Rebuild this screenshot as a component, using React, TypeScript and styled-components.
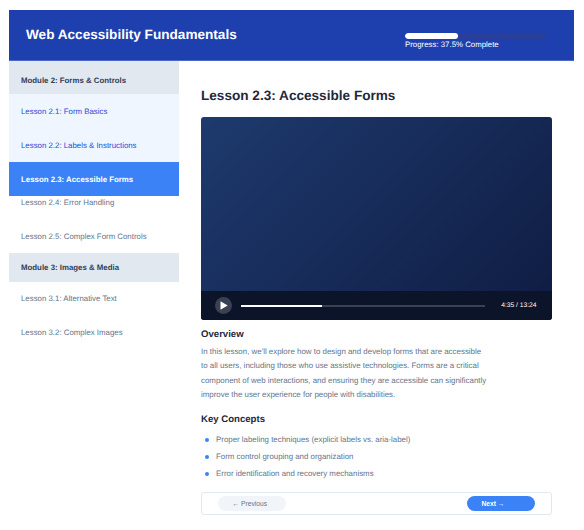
import React from "react";
import styled, { createGlobalStyle } from "styled-components";

const Global = createGlobalStyle`
  html, body { margin: 0; padding: 0; background: #fff; }
  body { font-family: "Liberation Sans", Arial, sans-serif; text-rendering: geometricPrecision; }
  * { box-sizing: border-box; }
`;

const Page = styled.div`
  width: 584px;
  height: 530px;
  padding: 10px 10px 0 9px;
  overflow: hidden;
`;
const Header = styled.header`
  height: 51px;
  display: flex;
  align-items: center;
  justify-content: space-between;
  padding: 0 28px 0 17px;
  background: #1e40af;
  border-bottom: 1px solid #4a68c8;
`;
const Title = styled.h1`
  margin: 0 0 2px;
  font-size: 13.6px;
  font-weight: 700;
  color: #fff;
`;
const ProgressBox = styled.div`
  width: 141px;
  display: flex;
  flex-direction: column;
  margin-top: 13px;
`;
const Track = styled.div`
  height: 6px;
  border-radius: 3px;
  background: #2a3f9a;
  overflow: hidden;
`;
const Fill = styled.div`
  height: 100%;
  border-radius: 3px;
  background: #fff;
`;
const ProgressLabel = styled.span`
  font-size: 7.85px;
  line-height: 12px;
  color: #fff;
`;
const Body = styled.div`
  display: flex;
`;
const Sidebar = styled.nav`
  width: 170px;
  flex: none;
  display: flex;
  flex-direction: column;
`;
const Module = styled.div<{ $h: number; $top?: number }>`
  height: ${(p) => p.$h}px;
  display: flex;
  align-items: center;
  padding: ${(p) => p.$top ?? 0}px 12px 0;
  background: #e2e8f0;
  font-size: 7.85px;
  font-weight: 700;
  color: #334155;
`;
const Lesson = styled.a<{ $state?: "done" | "active"; $tight?: boolean; $h?: number }>`
  height: ${(p) => p.$h ?? (p.$tight ? 24 : 34)}px;
  display: flex;
  align-items: ${(p) => (p.$tight ? "flex-start" : "center")};
  padding: ${(p) => (p.$state ? 2 : 0)}px 12px 0;
  font-size: 7.85px;
  line-height: 14px;
  font-weight: ${(p) => (p.$state === "active" ? 700 : 400)};
  color: ${(p) => (p.$state === "active" ? "#fff" : p.$state === "done" ? "#1d4ed8" : "#64748b")};
  background: ${(p) => (p.$state === "active" ? "#3b82f6" : p.$state === "done" ? "#eff6ff" : "#fff")};
`;
const Main = styled.main`
  flex: 1;
  min-width: 0;
  padding: 25px 22px 0;
`;
const LessonTitle = styled.h2`
  margin: 0 0 11px;
  font-size: 13.6px;
  line-height: 20px;
  font-weight: 700;
  color: #1e293b;
`;
const Video = styled.div`
  height: 203px;
  border-radius: 3px;
  overflow: hidden;
  display: flex;
  flex-direction: column;
  justify-content: flex-end;
  background: linear-gradient(135deg, #1e3a6e 0%, #0f1c42 100%);
`;
const Controls = styled.div`
  height: 29px;
  display: flex;
  align-items: center;
  padding: 0 15.5px 0 14px;
  background: #0c1429;
`;
const PlayButton = styled.button`
  width: 17px;
  height: 17px;
  flex: none;
  padding: 0;
  border: 0;
  border-radius: 50%;
  background: #3a4152;
  display: flex;
  align-items: center;
  justify-content: center;
`;
const Seek = styled.div`
  flex: 1;
  height: 2px;
  margin: 0 16px 0 9px;
  background: #3a4152;
`;
const SeekFill = styled.div`
  height: 100%;
  background: #fff;
`;
const Time = styled.span`
  font-size: 6.7px;
  color: #fff;
`;
const Heading = styled.h3`
  margin: 0;
  font-size: 9.6px;
  line-height: 14px;
  font-weight: 700;
  color: #1e293b;
`;
const OverviewHeading = styled(Heading)`
  margin-top: 8px;
`;
const Paragraph = styled.p`
  width: 287px;
  margin: 3px 0 0;
  font-size: 7.92px;
  line-height: 14.3px;
  color: #64748b;
`;
const ConceptsHeading = styled(Heading)`
  margin-top: 11px;
`;
const List = styled.ul`
  margin: 4px 0 0;
  padding: 0;
  list-style: none;
`;
const Item = styled.li`
  height: 17px;
  display: flex;
  align-items: center;
  gap: 7px;
  padding-left: 4px;
  font-size: 7.88px;
  color: #64748b;
`;
const Dot = styled.span`
  width: 4px;
  height: 4px;
  border-radius: 50%;
  background: #3b82f6;
`;
const Nav = styled.div`
  height: 23px;
  margin-top: 10px;
  display: flex;
  align-items: center;
  justify-content: space-between;
  padding: 0 16px;
  border: 1px solid #e2e8f0;
  border-radius: 3px;
`;
const NavButton = styled.button<{ $primary?: boolean }>`
  width: 68px;
  height: 15px;
  padding: 0 0 0 14.5px;
  border: 0;
  border-radius: 8px;
  text-align: left;
  font-family: inherit;
  font-size: 6.7px;
  font-weight: ${(p) => (p.$primary ? 700 : 400)};
  color: ${(p) => (p.$primary ? "#fff" : "#64748b")};
  background: ${(p) => (p.$primary ? "#3b82f6" : "#f1f5f9")};
`;

export default function App() {
  return (
    <Page>
      <Global />
      <Header>
        <Title>Web Accessibility Fundamentals</Title>
        <ProgressBox>
          <Track>
            <Fill style={{ width: "37.5%" }} />
          </Track>
          <ProgressLabel>Progress: 37.5% Complete</ProgressLabel>
        </ProgressBox>
      </Header>
      <Body>
        <Sidebar>
          <Module $h={33} $top={6}>Module 2: Forms &amp; Controls</Module>
          <Lesson $state="done">Lesson 2.1: Form Basics</Lesson>
          <Lesson $state="done">Lesson 2.2: Labels &amp; Instructions</Lesson>
          <Lesson $state="active">Lesson 2.3: Accessible Forms</Lesson>
          <Lesson $tight>Lesson 2.4: Error Handling</Lesson>
          <Lesson $h={33}>Lesson 2.5: Complex Form Controls</Lesson>
          <Module $h={29}>Module 3: Images &amp; Media</Module>
          <Lesson>Lesson 3.1: Alternative Text</Lesson>
          <Lesson>Lesson 3.2: Complex Images</Lesson>
        </Sidebar>
        <Main>
          <LessonTitle>Lesson 2.3: Accessible Forms</LessonTitle>
          <Video>
            <Controls>
              <PlayButton aria-label="Play">
                <svg width="8" height="9" viewBox="0 0 8 9">
                  <path d="M0.5 0.3 L7.7 4.5 L0.5 8.7 Z" fill="#fff" />
                </svg>
              </PlayButton>
              <Seek>
                <SeekFill style={{ width: "33.3%" }} />
              </Seek>
              <Time>4:35 / 13:24</Time>
            </Controls>
          </Video>
          <OverviewHeading>Overview</OverviewHeading>
          <Paragraph>
            In this lesson, we'll explore how to design and develop forms that are accessible to all users, including
            those who use assistive technologies. Forms are a critical component of web interactions, and ensuring they
            are accessible can significantly improve the user experience for people with disabilities.
          </Paragraph>
          <ConceptsHeading>Key Concepts</ConceptsHeading>
          <List>
            <Item><Dot />Proper labeling techniques (explicit labels vs. aria-label)</Item>
            <Item><Dot />Form control grouping and organization</Item>
            <Item><Dot />Error identification and recovery mechanisms</Item>
          </List>
          <Nav>
            <NavButton>← Previous</NavButton>
            <NavButton $primary>Next →</NavButton>
          </Nav>
        </Main>
      </Body>
    </Page>
  );
}
